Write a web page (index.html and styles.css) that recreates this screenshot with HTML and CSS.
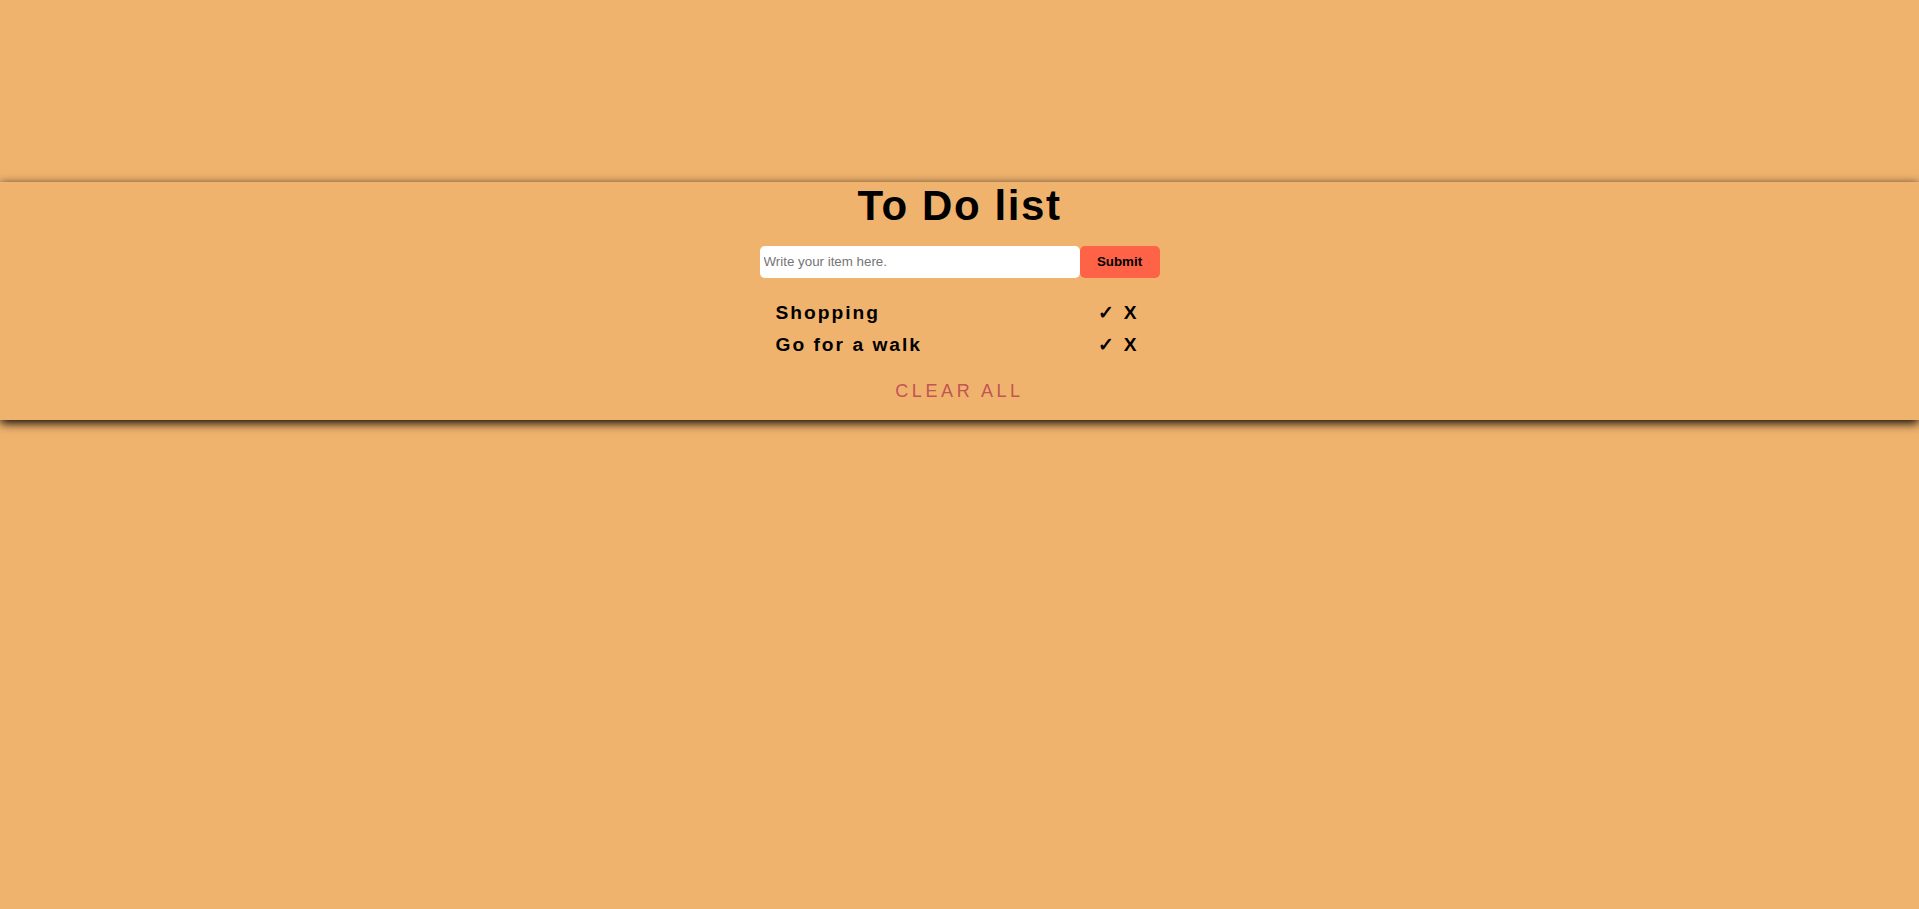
FILE: index.html
```html
<!DOCTYPE html>
<html lang="en">
<head>
<meta charset="utf-8">
<title>To Do list</title>
<link rel="stylesheet" href="styles.css">
</head>
<body>
<div class="page">
  <section class="panel">
    <h1 class="title">To Do list</h1>
    <form class="entry">
      <input class="entry-input" type="text" placeholder="Write your item here.">
      <button class="entry-submit" type="button">Submit</button>
    </form>
    <ul class="items">
      <li class="item"><span class="item-text">Shopping</span><span class="item-actions"><span class="done">✓</span> <span class="remove">X</span></span></li>
      <li class="item"><span class="item-text">Go for a walk</span><span class="item-actions"><span class="done">✓</span> <span class="remove">X</span></span></li>
    </ul>
    <button class="clear" type="button">CLEAR ALL</button>
  </section>
</div>
</body>
</html>
```

FILE: styles.css
```css
html, body {
  margin: 0;
  padding: 0;
  background: #f0b36e;
}
body {
  overflow-x: hidden;
  font-family: "Liberation Sans", Arial, sans-serif;
}
::-webkit-scrollbar {
  width: 17px;
  height: 17px;
  background: #f1f1f1;
}
::-webkit-scrollbar-track {
  background: #f1f1f1;
}
::-webkit-scrollbar-thumb {
  background: #c1c1c1;
  border-left: 1px solid #f1f1f1;
  border-right: 2px solid #f1f1f1;
  background-clip: padding-box;
}
::-webkit-scrollbar-button:single-button:vertical:decrement {
  display: block;
  height: 17px;
  background: #f1f1f1 url("data:image/svg+xml;utf8,<svg xmlns='http://www.w3.org/2000/svg' width='17' height='17'><path d='M4.5 10.5h8L8.5 6.5z' fill='%23a3a3a3'/></svg>") no-repeat center;
}
::-webkit-scrollbar-button:single-button:vertical:increment {
  display: block;
  height: 17px;
  background: #f1f1f1 url("data:image/svg+xml;utf8,<svg xmlns='http://www.w3.org/2000/svg' width='17' height='17'><path d='M4.5 6.5h8L8.5 10.5z' fill='%23505050'/></svg>") no-repeat center;
}
.page {
  min-height: 1083px;
  box-sizing: border-box;
  padding-top: 182px;
}
.panel {
  width: 100vw;
  background: #f0b36e;
  box-shadow: 0 3px 10px #000;
  display: flex;
  flex-direction: column;
  align-items: center;
  padding-bottom: 18.6px;
}
.title {
  margin: 0;
  font-size: 42px;
  line-height: 48.3px;
  font-weight: bold;
  letter-spacing: 1.6px;
  color: #000;
}
.entry {
  margin: 15.7px 0 0;
  display: flex;
  width: 400px;
}
.entry-input {
  width: 320px;
  height: 32px;
  box-sizing: border-box;
  border: none;
  border-radius: 5px;
  padding: 0 4px;
  font-family: "Liberation Sans", Arial, sans-serif;
  font-size: 13.33px;
  background: #fff;
  color: #000;
  outline: none;
}
.entry-input::placeholder {
  color: #757575;
}
.entry-submit {
  width: 80px;
  height: 32px;
  border: none;
  border-radius: 5px;
  background: #ff6347;
  color: #000;
  font-family: "Liberation Sans", Arial, sans-serif;
  font-size: 13.33px;
  font-weight: bold;
  padding: 0;
}
.items {
  list-style: none;
  margin: 19px 0 0;
  padding: 0;
  width: 400px;
}
.item {
  display: flex;
  justify-content: space-between;
  padding: 0 21px 0 16px;
  font-size: 19.2px;
  line-height: 31.7px;
  font-weight: bold;
  letter-spacing: 2px;
  color: #000;
}
.item-actions {
  white-space: pre;
}
.clear {
  margin-top: 20.5px;
  border: none;
  background: none;
  padding: 0;
  font-family: "Liberation Sans", Arial, sans-serif;
  font-size: 18px;
  letter-spacing: 3.6px;
  color: #c25552;
  line-height: normal;
}
```
